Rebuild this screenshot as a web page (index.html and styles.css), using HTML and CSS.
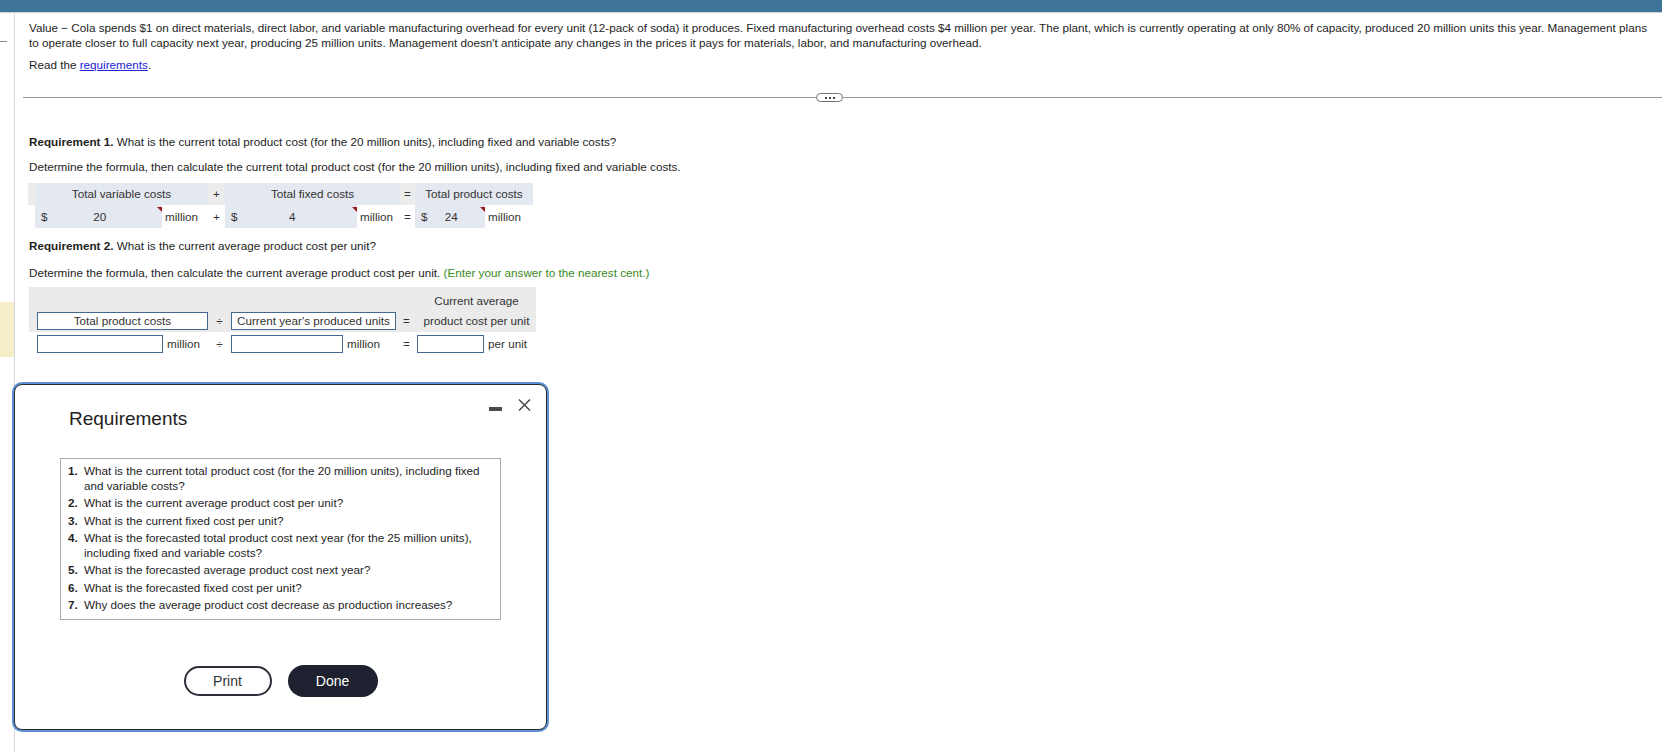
FILE: index.html
```html
<!DOCTYPE html>
<html lang="en">
<head>
    <meta charset="UTF-8">
    <title>Value - Cola product cost</title>
    <link rel="stylesheet" href="styles.css">
</head>
<body>
    <div class="topbar"></div>
    <div class="page">
        <div class="gutter">
            <div class="gutter-dash"></div>
            <div class="gutter-mark"></div>
        </div>
        <div class="content">
            <p class="intro">Value &minus; Cola spends $1 on direct materials, direct labor, and variable manufacturing overhead for every unit (12-pack of soda) it produces. Fixed manufacturing overhead costs $4 million per year. The plant, which is currently operating at only 80% of capacity, produced 20 million units this year. Management plans to operate closer to full capacity next year, producing 25 million units. Management doesn't anticipate any changes in the prices it pays for materials, labor, and manufacturing overhead.</p>
            <p class="read">Read the <a href="#">requirements</a>.</p>

            <div class="divider">
                <span class="divider-line lead"></span>
                <span class="pill"><i></i><i></i><i></i></span>
                <span class="divider-line"></span>
            </div>

            <p class="question"><strong>Requirement 1.</strong> What is the current total product cost (for the 20 million units), including fixed and variable costs?</p>
            <p class="hint">Determine the formula, then calculate the current total product cost (for the 20 million units), including fixed and variable costs.</p>

            <div class="calc-one">
                <div class="head"></div>
                <div class="head label">Total variable costs</div>
                <div class="head">+</div>
                <div class="head label">Total fixed costs</div>
                <div class="head">=</div>
                <div class="head label">Total product costs</div>

                <div></div>
                <div class="amount"><span>$</span><span class="val">20</span></div>
                <div class="unit">million</div>
                <div class="op">+</div>
                <div class="amount"><span>$</span><span class="val">4</span></div>
                <div class="unit">million</div>
                <div class="op">=</div>
                <div class="amount"><span>$</span><span class="val">24</span></div>
                <div class="unit">million</div>
            </div>

            <p class="question second"><strong>Requirement 2.</strong> What is the current average product cost per unit?</p>
            <p class="hint hint-wide">Determine the formula, then calculate the current average product cost per unit. <span class="note">(Enter your answer to the nearest cent.)</span></p>

            <div class="calc-two">
                <div class="calc-two-head">
                    <div class="avg-title">Current average</div>
                    <div class="field-label first">Total product costs</div>
                    <div class="op op-div">&divide;</div>
                    <div class="field-label second">Current year's produced units</div>
                    <div class="op op-eq">=</div>
                    <div class="avg-sub">product cost per unit</div>
                </div>
                <div class="calc-two-row">
                    <div></div>
                    <div class="box"></div>
                    <div class="unit">million</div>
                    <div class="op">&divide;</div>
                    <div class="box"></div>
                    <div class="unit">million</div>
                    <div class="op">=</div>
                    <div class="box"></div>
                    <div class="unit">per unit</div>
                </div>
            </div>
        </div>
    </div>

    <div class="dialog">
        <div class="dialog-tools">
            <span class="tool-min"></span>
            <svg class="tool-close" width="13" height="12" viewBox="0 0 13 12">
                <path d="M1 0.5 L12 11.5 M12 0.5 L1 11.5" stroke="#444" stroke-width="1.4" fill="none"/>
            </svg>
        </div>
        <h2>Requirements</h2>
        <ol class="req-list">
            <li><b>1.</b><span>What is the current total product cost (for the 20 million units), including fixed and variable costs?</span></li>
            <li><b>2.</b><span>What is the current average product cost per unit?</span></li>
            <li><b>3.</b><span>What is the current fixed cost per unit?</span></li>
            <li><b>4.</b><span>What is the forecasted total product cost next year (for the 25 million units), including fixed and variable costs?</span></li>
            <li><b>5.</b><span>What is the forecasted average product cost next year?</span></li>
            <li><b>6.</b><span>What is the forecasted fixed cost per unit?</span></li>
            <li><b>7.</b><span>Why does the average product cost decrease as production increases?</span></li>
        </ol>
        <div class="dialog-buttons">
            <button class="btn btn-print">Print</button>
            <button class="btn btn-done">Done</button>
        </div>
    </div>
</body>
</html>
```

FILE: styles.css
```css
* {
    margin: 0;
    padding: 0;
    box-sizing: border-box;
}
body {
    font-family: "Liberation Sans", Arial, sans-serif;
    font-size: 11.7px;
    color: #1e1e1e;
    background: #fff;
    overflow: hidden;
}
.topbar {
    height: 13px;
    background: #3f7499;
    border-bottom: 1px solid #c8d4de;
}
.page {
    display: flex;
    min-height: 739px;
}
.gutter {
    width: 15px;
    flex-shrink: 0;
    border-right: 1px solid #d8d9e0;
}
.gutter-dash {
    width: 7px;
    height: 1px;
    background: #8a8a8a;
    margin-top: 28px;
}
.gutter-mark {
    height: 55px;
    margin-top: 260px;
    background: #f6eec9;
}
.content {
    flex: 1;
    padding: 7px 8px 0 14px;
}
.intro,
.read,
.question,
.hint {
    line-height: 15px;
}
.read {
    margin-top: 7px;
}
a {
    color: #2323d8;
}
.divider {
    display: flex;
    align-items: center;
    height: 9px;
    margin: 21px -8px 0 -6px;
}
.divider-line {
    flex: 1;
    height: 1px;
    background: #9599a3;
}
.divider-line.lead {
    flex: 0 0 793px;
}
.pill {
    width: 27px;
    height: 9px;
    border: 1px solid #6d727d;
    border-radius: 5px;
    display: flex;
    align-items: center;
    justify-content: center;
    gap: 2px;
}
.pill i {
    width: 2px;
    height: 2px;
    background: #444;
}
.question {
    margin-top: 32px;
}
.question.second {
    margin-top: 10px;
}
.hint {
    margin-top: 10px;
}
.hint-wide {
    margin-top: 12px;
}
.note {
    color: #3a8a22;
}

/* requirement 1 table */
.calc-one {
    display: grid;
    grid-template-columns: 7px 127px 46px 17px 132px 43px 15px 70px 48px;
    width: 505px;
    margin: 9px 0 0 -1px;
    color: #333;
}
.calc-one .head {
    height: 22px;
    line-height: 22px;
    text-align: center;
    background: #ececec;
}
.calc-one .label {
    grid-column: span 2;
    background: #e4e8f0;
}
.amount {
    position: relative;
    height: 23px;
    display: flex;
    align-items: center;
    padding: 0 10px 0 6px;
    background: #e4e8f0;
}
.amount .val {
    flex: 1;
    text-align: center;
}
.amount::after {
    content: "";
    position: absolute;
    top: 2px;
    right: 0;
    border-top: 5px solid #9b1c1c;
    border-left: 5px solid transparent;
}
.unit {
    line-height: 23px;
    padding-left: 3px;
    white-space: nowrap;
}
.op {
    line-height: 23px;
    text-align: center;
}

/* requirement 2 table */
.calc-two {
    margin-top: 7px;
    width: 507px;
    color: #333;
}
.calc-two-head,
.calc-two-row {
    display: grid;
    grid-template-columns: 8px 126px 45px 23px 112px 53px 21px 67px 52px;
}
.calc-two-head {
    grid-template-rows: 22px 23px;
    background: #ebebeb;
}
.avg-title {
    grid-column: 8 / span 2;
    grid-row: 1;
    text-align: center;
    padding-top: 6px;
    line-height: 15px;
}
.field-label {
    grid-row: 2;
    align-self: center;
    height: 18px;
    line-height: 16px;
    text-align: center;
    background: #fff;
    border: 1px solid #44698f;
    white-space: nowrap;
}
.field-label.first {
    grid-column: 2 / span 2;
}
.field-label.second {
    grid-column: 5 / span 2;
}
.op-div {
    grid-row: 2;
    grid-column: 4;
}
.op-eq {
    grid-row: 2;
    grid-column: 7;
}
.avg-sub {
    grid-column: 8 / span 2;
    grid-row: 2;
    line-height: 23px;
    text-align: center;
    white-space: nowrap;
}
.calc-two-row {
    height: 24px;
}
.calc-two-row .unit,
.calc-two-row .op {
    line-height: 24px;
}
.calc-two-row .unit {
    padding-left: 4px;
}
.box {
    height: 18px;
    margin-top: 3px;
    background: #fff;
    border: 1px solid #44698f;
}

/* requirements dialog */
.dialog {
    position: absolute;
    left: 14px;
    top: 384px;
    width: 533px;
    height: 346px;
    background: #fff;
    border: 1px solid #2b2b2b;
    border-radius: 8px;
    box-shadow: 0 0 0 2px #5d91d4;
    padding-top: 23px;
}
.dialog-tools {
    position: absolute;
    top: 14px;
    right: 15px;
    display: flex;
    align-items: flex-end;
    gap: 16px;
}
.tool-min {
    width: 13px;
    height: 4px;
    background: #4a4a4a;
}
.tool-close {
    display: block;
}
.dialog h2 {
    font-size: 19px;
    font-weight: normal;
    line-height: 22px;
    color: #222;
    margin-left: 54px;
}
.req-list {
    list-style: none;
    width: 441px;
    margin: 28px 0 0 45px;
    padding: 5px 8px 6px 7px;
    border: 1px solid #aaa;
    line-height: 14.5px;
}
.req-list li {
    display: flex;
    margin-bottom: 3px;
}
.req-list li:last-child {
    margin-bottom: 0;
}
.req-list b {
    width: 16px;
    flex-shrink: 0;
}
.dialog-buttons {
    display: flex;
    justify-content: center;
    align-items: center;
    gap: 16px;
    margin-top: 45px;
}
.btn {
    font-family: "Liberation Sans", Arial, sans-serif;
    font-size: 14px;
    border-radius: 16px;
    cursor: pointer;
}
.btn-print {
    width: 88px;
    height: 30px;
    background: #fff;
    color: #333;
    border: 2px solid #2e2e38;
}
.btn-done {
    width: 90px;
    height: 32px;
    background: #1e2230;
    color: #fff;
    border: none;
}
```
